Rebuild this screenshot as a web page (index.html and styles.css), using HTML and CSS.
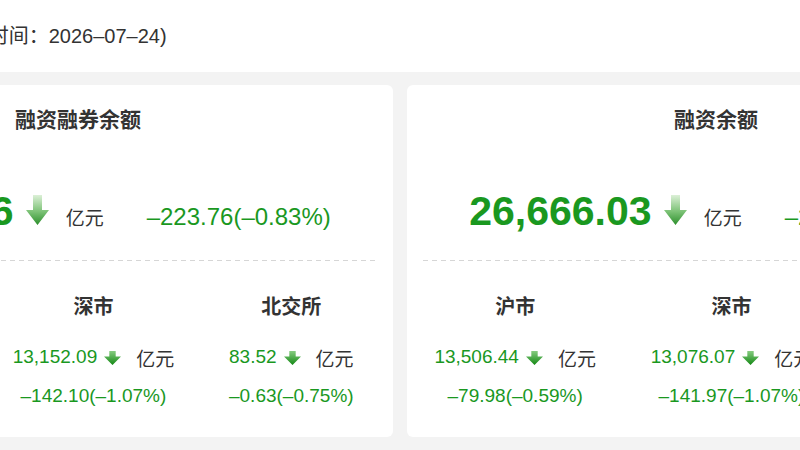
FILE: index.html
```html
<!DOCTYPE html>
<html lang="zh-CN">
<head>
<meta charset="utf-8">
<title>两融数据</title>
<link rel="stylesheet" href="styles.css">
</head>
<body>
<svg class="defs" width="0" height="0" aria-hidden="true">
  <defs>
    <linearGradient id="down-lg" x1="0" y1="0" x2="0" y2="1">
      <stop offset="0" stop-color="#dcf0d7"/>
      <stop offset="0.55" stop-color="#7cc276"/>
      <stop offset="1" stop-color="#2c8f2c"/>
    </linearGradient>
    <linearGradient id="down-sm" x1="0" y1="0" x2="0" y2="1">
      <stop offset="0" stop-color="#86cc80"/>
      <stop offset="1" stop-color="#148814"/>
    </linearGradient>
  </defs>
</svg>

<header class="top">
  <div class="top-inner">
    <span class="stamp">两融数据(数据更新时间：2026–07–24)</span>
  </div>
</header>

<main class="board">
  <section class="card">
    <h2 class="card-title">融资融券余额</h2>
    <div class="big-row">
      <span class="big-num">27,047.76</span>
      <svg class="arrow-lg" viewBox="0 0 23 30"><path d="M7 0H16V15H23L11.5 30L0 15H7Z" fill="url(#down-lg)"/></svg>
      <span class="unit">亿元</span>
      <span class="big-change">–223.76(–0.83%)</span>
    </div>
    <div class="dash"></div>
    <div class="markets">
      <div class="market">
        <div class="market-name">沪市</div>
        <div class="market-val"><span class="num">13,812.15</span><svg class="arrow-sm" viewBox="0 0 16 13"><path d="M5 0H11V5H16L8 13L0 5H5Z" fill="url(#down-sm)"/></svg><span class="unit-sm">亿元</span></div>
        <div class="market-chg">–81.03(–0.58%)</div>
      </div>
      <div class="market">
        <div class="market-name">深市</div>
        <div class="market-val"><span class="num">13,152.09</span><svg class="arrow-sm" viewBox="0 0 16 13"><path d="M5 0H11V5H16L8 13L0 5H5Z" fill="url(#down-sm)"/></svg><span class="unit-sm">亿元</span></div>
        <div class="market-chg">–142.10(–1.07%)</div>
      </div>
      <div class="market">
        <div class="market-name">北交所</div>
        <div class="market-val"><span class="num">83.52</span><svg class="arrow-sm" viewBox="0 0 16 13"><path d="M5 0H11V5H16L8 13L0 5H5Z" fill="url(#down-sm)"/></svg><span class="unit-sm">亿元</span></div>
        <div class="market-chg">–0.63(–0.75%)</div>
      </div>
    </div>
  </section>

  <section class="card">
    <h2 class="card-title">融资余额</h2>
    <div class="big-row">
      <span class="big-num">26,666.03</span>
      <svg class="arrow-lg" viewBox="0 0 23 30"><path d="M7 0H16V15H23L11.5 30L0 15H7Z" fill="url(#down-lg)"/></svg>
      <span class="unit">亿元</span>
      <span class="big-change">–222.58(–0.83%)</span>
    </div>
    <div class="dash"></div>
    <div class="markets">
      <div class="market">
        <div class="market-name">沪市</div>
        <div class="market-val"><span class="num">13,506.44</span><svg class="arrow-sm" viewBox="0 0 16 13"><path d="M5 0H11V5H16L8 13L0 5H5Z" fill="url(#down-sm)"/></svg><span class="unit-sm">亿元</span></div>
        <div class="market-chg">–79.98(–0.59%)</div>
      </div>
      <div class="market">
        <div class="market-name">深市</div>
        <div class="market-val"><span class="num">13,076.07</span><svg class="arrow-sm" viewBox="0 0 16 13"><path d="M5 0H11V5H16L8 13L0 5H5Z" fill="url(#down-sm)"/></svg><span class="unit-sm">亿元</span></div>
        <div class="market-chg">–141.97(–1.07%)</div>
      </div>
      <div class="market">
        <div class="market-name">北交所</div>
        <div class="market-val"><span class="num">83.52</span><svg class="arrow-sm" viewBox="0 0 16 13"><path d="M5 0H11V5H16L8 13L0 5H5Z" fill="url(#down-sm)"/></svg><span class="unit-sm">亿元</span></div>
        <div class="market-chg">–0.62(–0.74%)</div>
      </div>
    </div>
  </section>
</main>
</body>
</html>
```
FILE: styles.css
```css
* {
  box-sizing: border-box;
}

html,
body {
  margin: 0;
  height: 100%;
  overflow: hidden;
}

body {
  font-family: "Liberation Sans", "Noto Sans CJK SC", sans-serif;
  background: #f3f3f3;
  color: #333;
}

.defs {
  position: absolute;
  width: 0;
  height: 0;
}

/* header strip with the update time */
.top {
  height: 72px;
  background: #fff;
  display: flex;
  justify-content: center;
}

.top-inner {
  flex: 0 0 1262px;
  padding-left: 53px;
  display: flex;
  align-items: center;
}

.stamp {
  font-size: 20px;
  line-height: 28px;
  color: #333;
  white-space: nowrap;
}

/* two wide cards, centred in the window */
.board {
  display: flex;
  justify-content: center;
  gap: 14px;
  padding-top: 13px;
}

.card {
  flex: 0 0 624px;
  height: 352px;
  background: #fff;
  border-radius: 6px;
  padding-top: 20px;
}

.card-title {
  margin: 0;
  padding-right: 6px;
  text-align: center;
  font-size: 21px;
  line-height: 30px;
  font-weight: 700;
  color: #333;
}

.big-row {
  margin-top: 52px;
  height: 48px;
  display: flex;
  justify-content: center;
  align-items: baseline;
  white-space: nowrap;
}

.big-num {
  font-size: 41px;
  line-height: 48px;
  font-weight: 700;
  color: #1a981f;
}

.arrow-lg {
  width: 23px;
  height: 30px;
  margin: 0 17px 0 12px;
}

.unit {
  font-size: 19px;
  color: #333;
}

.big-change {
  margin-left: 43px;
  font-size: 24px;
  color: #1a981f;
}

.dash {
  height: 1px;
  margin: 25px 16px 0;
  background: repeating-linear-gradient(to right, #d6d6d6 0 5px, transparent 5px 9px);
}

.markets {
  display: flex;
  justify-content: space-around;
  padding: 32px 12px 0 0;
}

.market {
  display: flex;
  flex-direction: column;
  align-items: center;
  white-space: nowrap;
}

.market-name {
  font-size: 20px;
  line-height: 28px;
  font-weight: 700;
  color: #333;
  margin-bottom: 22px;
}

.market-val {
  display: flex;
  align-items: center;
  height: 28px;
  margin-bottom: 11px;
  font-size: 19px;
}

.num {
  color: #1a981f;
}

.arrow-sm {
  width: 17px;
  height: 14px;
  margin: 2px 15px 0 7px;
}

.unit-sm {
  color: #333;
}

.market-chg {
  font-size: 19px;
  line-height: 28px;
  color: #1a981f;
}
```
